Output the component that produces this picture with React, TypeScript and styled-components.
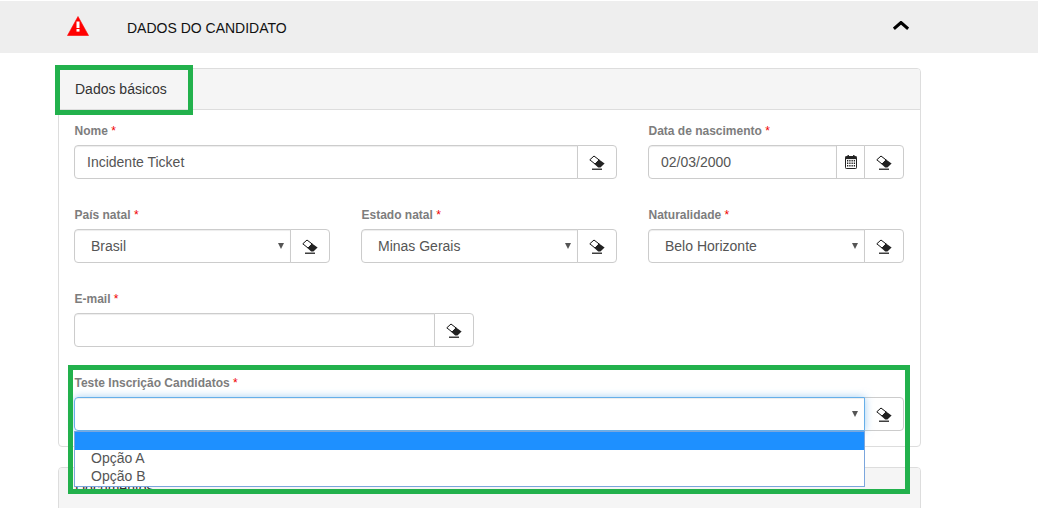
import React from "react";
import styled, { createGlobalStyle } from "styled-components";

const Global = createGlobalStyle`
  html, body { margin: 0; padding: 0; background: #fff; }
  body { font-family: "Liberation Sans", Arial, sans-serif; font-size: 14px; color: #333; height: 508px; overflow: hidden; }
  * { box-sizing: border-box; }
`;

const Page = styled.div`
  position: relative;
  width: 1038px;
  height: 508px;
  overflow: hidden;
  padding-top: 1px;
`;

const SectionBar = styled.header`
  height: 52px;
  background: #eeeeee;
  display: flex;
  align-items: center;
  padding: 0 129px 0 67px;
`;

const SectionTitle = styled.h2`
  flex: 1;
  margin: 2px 0 0 38px;
  font-size: 14px;
  font-weight: 400;
  color: #111;
  line-height: 20px;
`;

const Panel = styled.section<{ $top: number }>`
  width: 863px;
  margin: ${(p) => p.$top}px 0 0 58px;
  border: 1px solid #ddd;
  border-radius: 4px;
  background: #fff;
`;

const PanelHeading = styled.div<{ $open?: boolean }>`
  height: ${(p) => (p.$open ? 80 : 41)}px;
  background: #f5f5f5;
  border-bottom: 1px solid #ddd;
  border-radius: 3px 3px 0 0;
  padding: 10px 15px 10px 16px;
  font-size: 14px;
  line-height: 20px;
  color: #333;
`;

const PanelBody = styled.div`
  padding: 13px 15px 15px;
  display: grid;
  grid-template-columns: repeat(3, 256px);
  column-gap: 31px;
  row-gap: 28px;
`;

const Field = styled.div<{ $span?: number; $width?: number }>`
  grid-column: span ${(p) => p.$span ?? 1};
  ${(p) => (p.$width ? `width: ${p.$width}px;` : "")}
  position: relative;
`;

const Label = styled.label`
  display: block;
  height: 17px;
  margin-bottom: 5px;
  padding-left: 0.5px;
  font-size: 12px;
  line-height: 17px;
  font-weight: 700;
  color: #7d7d7d;
`;

const Required = styled.span`
  color: #f00000;
  font-weight: 400;
`;

const Group = styled.div`
  display: flex;
  height: 34px;
`;

const TextInput = styled.div`
  flex: 1;
  min-width: 0;
  height: 34px;
  border: 1px solid #ccc;
  border-radius: 4px 0 0 4px;
  padding: 0 12px;
  font-size: 14px;
  line-height: 32px;
  color: #555;
  box-shadow: inset 0 1px 1px rgba(0, 0, 0, 0.075);
`;

const SelectBox = styled.div<{ $focus?: boolean }>`
  flex: 1;
  min-width: 0;
  height: 34px;
  border: 1px solid ${(p) => (p.$focus ? "#66afe9" : "#ccc")};
  border-radius: 4px 0 0 4px;
  padding: 0 6px 0 16px;
  display: flex;
  align-items: center;
  justify-content: space-between;
  font-size: 14px;
  color: #555;
  position: relative;
  box-shadow: ${(p) =>
    p.$focus
      ? "inset 0 1px 1px rgba(0,0,0,.075), 0 0 8px rgba(102,175,233,.6)"
      : "inset 0 1px 1px rgba(0,0,0,.075)"};
`;

const Caret = styled.i`
  width: 0;
  height: 0;
  border-left: 3.5px solid transparent;
  border-right: 3.5px solid transparent;
  border-top: 6px solid #555;
`;

const Addon = styled.button<{ $narrow?: boolean }>`
  flex: none;
  width: ${(p) => (p.$narrow ? 29 : 40)}px;
  height: 34px;
  margin-left: -1px;
  padding: 0;
  background: #fff;
  border: 1px solid #ccc;
  display: flex;
  align-items: center;
  justify-content: center;
  border-radius: ${(p) => (p.$narrow ? "0" : "0 4px 4px 0")};
`;

const Dropdown = styled.ul`
  position: absolute;
  z-index: 3;
  left: 0;
  top: 56px;
  width: 791px;
  height: 56px;
  margin: 0;
  padding: 0;
  list-style: none;
  background: #fff;
  border: 1px solid #7ba6dd;
`;

const Option = styled.li<{ $selected?: boolean }>`
  height: 18px;
  padding-left: 16px;
  font-size: 14px;
  line-height: 16px;
  color: #555;
  background: ${(p) => (p.$selected ? "#1e90ff" : "transparent")};
`;

const Highlight = styled.div<{ $x: number; $y: number; $w: number; $h: number }>`
  position: absolute;
  z-index: 4;
  left: ${(p) => p.$x}px;
  top: ${(p) => p.$y}px;
  width: ${(p) => p.$w}px;
  height: ${(p) => p.$h}px;
  border: 5px solid #22b14c;
  pointer-events: none;
`;

const WarningIcon = () => (
  <svg width="22" height="20" viewBox="0 0 22 20" style={{ flex: "none", marginTop: -3 }}>
    <path d="M11 0.5 L21.5 19.5 H0.5 Z" fill="#ff0000" stroke="#ff0000" strokeWidth="0.6" strokeLinejoin="round" />
    <rect x="9.5" y="5.5" width="3" height="6.5" fill="#fff" />
    <rect x="9.5" y="13" width="3" height="2.6" fill="#fff" />
  </svg>
);

const ChevronUp = () => (
  <svg width="16" height="10" viewBox="0 0 16 10" style={{ flex: "none", marginTop: -2 }}>
    <path d="M0.8 7.8 L8 1.6 L15.2 7.8" fill="none" stroke="#000" strokeWidth="3.2" />
  </svg>
);

const Eraser = () => (
  <svg width="16" height="15" viewBox="0 0 16 15">
    <path d="M5 1 L0.8 4.8 L6 9 L10.2 5 Z" fill="#fff" stroke="#111" strokeWidth="1" strokeLinejoin="round" />
    <path d="M10 4.6 L15.6 8.6 L11.4 12.6 H9.2 L5.6 9.2 Z" fill="#222" />
    <rect x="3" y="13.6" width="10" height="1.2" fill="#111" />
  </svg>
);

const CalendarIcon = () => (
  <svg width="12" height="14" viewBox="0 0 12 14">
    <rect x="0.5" y="1.5" width="11" height="12" rx="0.8" fill="#fff" stroke="#222" />
    <rect x="0.5" y="1.5" width="11" height="2.6" fill="#222" />
    <rect x="2.5" y="0" width="1.4" height="2" fill="#222" />
    <rect x="8.1" y="0" width="1.4" height="2" fill="#222" />
    {[5, 7.5, 10].map((y) =>
      [2, 4.25, 6.5, 8.75].map((x) => (
        <rect key={`${x}-${y}`} x={x} y={y} width="1.3" height="1.5" fill="#222" />
      ))
    )}
  </svg>
);

function FieldLabel({ children }: { children: React.ReactNode }) {
  return (
    <Label>
      {children} <Required>*</Required>
    </Label>
  );
}

function SelectField({ label, value }: { label: string; value: string }) {
  return (
    <Field>
      <FieldLabel>{label}</FieldLabel>
      <Group>
        <SelectBox>
          <span>{value}</span>
          <Caret />
        </SelectBox>
        <Addon><Eraser /></Addon>
      </Group>
    </Field>
  );
}

export default function App() {
  return (
    <Page>
      <Global />
      <SectionBar>
        <WarningIcon />
        <SectionTitle>DADOS DO CANDIDATO</SectionTitle>
        <ChevronUp />
      </SectionBar>

      <Panel $top={15}>
        <PanelHeading>Dados básicos</PanelHeading>
        <PanelBody>
          <Field $span={2}>
            <FieldLabel>Nome</FieldLabel>
            <Group>
              <TextInput>Incidente Ticket</TextInput>
              <Addon><Eraser /></Addon>
            </Group>
          </Field>
          <Field>
            <FieldLabel>Data de nascimento</FieldLabel>
            <Group>
              <TextInput>02/03/2000</TextInput>
              <Addon $narrow><CalendarIcon /></Addon>
              <Addon><Eraser /></Addon>
            </Group>
          </Field>

          <SelectField label="País natal" value="Brasil" />
          <SelectField label="Estado natal" value="Minas Gerais" />
          <SelectField label="Naturalidade" value="Belo Horizonte" />

          <Field $span={3} $width={400}>
            <FieldLabel>E-mail</FieldLabel>
            <Group>
              <TextInput />
              <Addon><Eraser /></Addon>
            </Group>
          </Field>

          <Field $span={3}>
            <FieldLabel>Teste Inscrição Candidatos</FieldLabel>
            <Group>
              <SelectBox $focus>
                <span />
                <Caret />
              </SelectBox>
              <Addon><Eraser /></Addon>
            </Group>
            <Dropdown>
              <Option $selected />
              <Option>Opção A</Option>
              <Option>Opção B</Option>
            </Dropdown>
          </Field>
        </PanelBody>
      </Panel>

      <Panel $top={20}>
        <PanelHeading $open>Documentos</PanelHeading>
      </Panel>

      <Highlight $x={55} $y={65} $w={138} $h={50} />
      <Highlight $x={68} $y={365} $w={842} $h={129} />
    </Page>
  );
}
